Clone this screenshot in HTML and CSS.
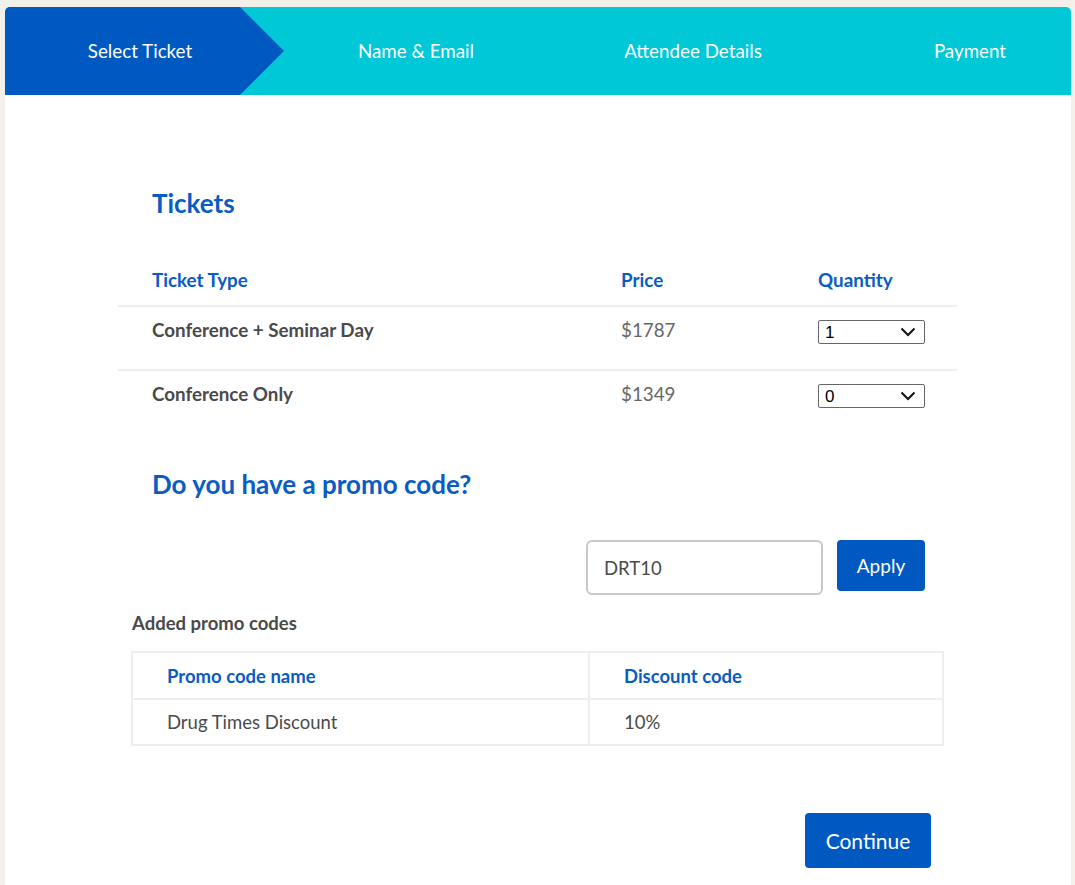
FILE: index.html
```html
<!DOCTYPE html>
<html>
<head>
<meta charset="utf-8">
<link rel="stylesheet" href="styles.css">
</head>
<body>
<div class="card">
  <div class="steps">
    <div class="step step-active">Select Ticket</div>
    <div class="step step-2">Name &amp; Email</div>
    <div class="step step-3">Attendee Details</div>
    <div class="step step-4">Payment</div>
  </div>
  <div class="content">
    <h2 class="heading">Tickets</h2>
    <table class="tickets">
      <thead>
        <tr><th class="c-type">Ticket Type</th><th class="c-price">Price</th><th class="c-qty">Quantity</th></tr>
      </thead>
      <tbody>
        <tr>
          <td class="name">Conference + Seminar Day</td>
          <td class="price">$1787</td>
          <td>
            <span class="select-wrap">
              <select class="qty"><option>0</option><option selected>1</option><option>2</option></select>
              <svg class="chev" width="16" height="10" viewBox="0 0 16 10"><path d="M1.5 1.5 L8 8 L14.5 1.5" fill="none" stroke="#111" stroke-width="2"/></svg>
            </span>
          </td>
        </tr>
        <tr>
          <td class="name">Conference Only</td>
          <td class="price">$1349</td>
          <td>
            <span class="select-wrap">
              <select class="qty"><option selected>0</option><option>1</option><option>2</option></select>
              <svg class="chev" width="16" height="10" viewBox="0 0 16 10"><path d="M1.5 1.5 L8 8 L14.5 1.5" fill="none" stroke="#111" stroke-width="2"/></svg>
            </span>
          </td>
        </tr>
      </tbody>
    </table>
    <h2 class="heading heading-promo">Do you have a promo code?</h2>
    <div class="promo-form">
      <input class="promo-input" type="text" value="DRT10">
      <button class="btn btn-apply">Apply</button>
    </div>
    <div class="added-label">Added promo codes</div>
    <table class="promos">
      <thead><tr><th class="p-name">Promo code name</th><th>Discount code</th></tr></thead>
      <tbody><tr><td>Drug Times Discount</td><td>10%</td></tr></tbody>
    </table>
    <div class="actions">
      <button class="btn btn-continue">Continue</button>
    </div>
  </div>
</div>
</body>
</html>
```

FILE: styles.css
```css
* { box-sizing: border-box; }
html, body { margin: 0; padding: 0; }
body {
  background: #f3f0e9;
  font-family: Lato, "Open Sans", Arial, sans-serif;
  color: #4a4a4a;
}
.card {
  margin: 7px 4px 0 5px;
  background: #ffffff;
  border-radius: 5px 5px 0 0;
  min-height: 878px;
  overflow: hidden;
}
.steps {
  display: flex;
  height: 88px;
  background: #00c8d7;
  color: #ffffff;
  font-size: 18.8px;
}
.step {
  display: flex;
  align-items: center;
  justify-content: center;
  flex: none;
  padding-bottom: 2px;
}
.step-active {
  width: 279px;
  padding-right: 9px;
  background: #0059c1;
  clip-path: polygon(0 0, 235px 0, 279px 50%, 235px 100%, 0 100%);
}
.step-2 { width: 264px; }
.step-3 { width: 290px; }
.step-4 { flex: 1; padding-left: 31px; }

.content {
  padding: 92px 114px 0 113px;
}
.heading {
  margin: 0;
  padding-left: 34px;
  font-size: 26px;
  line-height: 32px;
  font-weight: 700;
  color: #0a5bc4;
}
.tickets {
  width: 100%;
  border-collapse: collapse;
  margin-top: 50px;
  font-size: 18.8px;
}
.tickets th {
  text-align: left;
  color: #0a5bc4;
  font-weight: 700;
  line-height: 22px;
  padding: 0 0 14px 34px;
}
.c-type { width: 469px; }
.c-price { width: 197px; }
.tickets td {
  border-top: 2px solid #eeeeee;
  padding: 12px 0 25px 34px;
  line-height: 22px;
  vertical-align: top;
}
.tickets td.name { font-weight: 700; }
.tickets td.price { color: #666666; }
.select-wrap {
  position: relative;
  display: block;
  width: 107px;
  height: 24px;
  margin-top: 1px;
}
.qty {
  -webkit-appearance: none;
  appearance: none;
  display: block;
  width: 107px;
  height: 24px;
  padding: 0 0 0 6px;
  font-family: Arial, "Liberation Sans", sans-serif;
  font-size: 17px;
  color: #000;
  border: 1px solid #666;
  border-radius: 2px;
  background: #fff;
}
.chev {
  position: absolute;
  right: 9px;
  top: 7px;
  pointer-events: none;
}
.heading-promo { margin-top: 35px; }
.promo-form {
  display: flex;
  justify-content: flex-end;
  align-items: flex-start;
  gap: 14px;
  margin: 40px 32px 0 0;
}
.promo-input {
  width: 237px;
  height: 55px;
  border: 2px solid #c5c8cc;
  border-radius: 6px;
  padding: 0 16px;
  font-family: Lato, "Open Sans", Arial, sans-serif;
  font-size: 18.5px;
  color: #4a4a4a;
  outline: none;
}
.btn {
  border: none;
  background: #0059c1;
  color: #ffffff;
  font-family: Lato, "Open Sans", Arial, sans-serif;
  border-radius: 4px;
  cursor: pointer;
}
.btn-apply {
  width: 88px;
  height: 51px;
  font-size: 19px;
}
.added-label {
  margin: 17px 0 0 14px;
  font-size: 18.5px;
  line-height: 22px;
  font-weight: 700;
}
.promos {
  width: 813px;
  margin: 17px 0 0 13px;
  border-collapse: collapse;
  font-size: 18.5px;
}
.promos th, .promos td {
  border: 2px solid #eeeeee;
  text-align: left;
  padding: 0 0 0 34px;
  line-height: 22px;
}
.promos th {
  height: 47px;
  color: #0a5bc4;
  font-weight: 700;
}
.promos th.p-name { width: 457px; }
.promos td { height: 46px; }
.actions {
  display: flex;
  justify-content: flex-end;
  margin: 67px 26px 0 0;
}
.btn-continue {
  width: 126px;
  height: 55px;
  font-size: 21px;
}
```
